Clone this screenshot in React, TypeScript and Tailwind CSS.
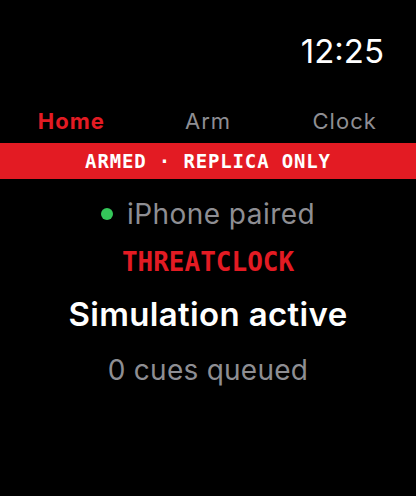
import React from "react";

const tabs = [
  { label: "Home", active: true },
  { label: "Arm", active: false },
  { label: "Clock", active: false },
];

const mono = { fontFamily: "'DejaVu Sans Mono', 'Liberation Mono', monospace" };

export default function App() {
  return (
    <div
      className="w-[416px] h-[496px] bg-black text-white overflow-hidden flex flex-col"
      style={{ fontFamily: "Inter, Roboto, sans-serif" }}
    >
      <div className="flex justify-end pr-[32px] pt-[32px]">
        <span className="text-[33px] leading-[38px] font-normal">12:25</span>
      </div>

      <div className="grid grid-cols-3 mt-[36px] px-[3px]">
        {tabs.map((t) => (
          <div
            key={t.label}
            className={`text-center text-[22px] leading-[30px] tracking-[1px] ${
              t.active ? "text-[#e31b23] font-bold" : "text-[#8e8e93] font-normal"
            }`}
          >
            {t.label}
          </div>
        ))}
      </div>

      <div
        className="mt-[7px] h-[36px] bg-[#e31b23] flex items-center justify-center text-[19px] font-bold tracking-[0.85px]"
        style={mono}
      >
        ARMED · REPLICA ONLY
      </div>

      <div className="flex flex-col items-center">
        <div className="mt-[16px] flex items-center gap-[14px] text-[28px] leading-[38px] tracking-[0.45px] text-[#8e8e93]">
          <span className="w-[12px] h-[12px] rounded-full bg-[#34c759]" />
          <span>iPhone paired</span>
        </div>
        <div className="mt-[14px] text-[26px] leading-[30px] font-bold text-[#e31b23]" style={mono}>
          THREATCLOCK
        </div>
        <div className="mt-[17px] text-[33px] leading-[40px] font-semibold tracking-[0.35px]">
          Simulation active
        </div>
        <div className="mt-[17px] text-[28px] leading-[38px] tracking-[0.25px] text-[#8e8e93]">
          0 cues queued
        </div>
      </div>
    </div>
  );
}
